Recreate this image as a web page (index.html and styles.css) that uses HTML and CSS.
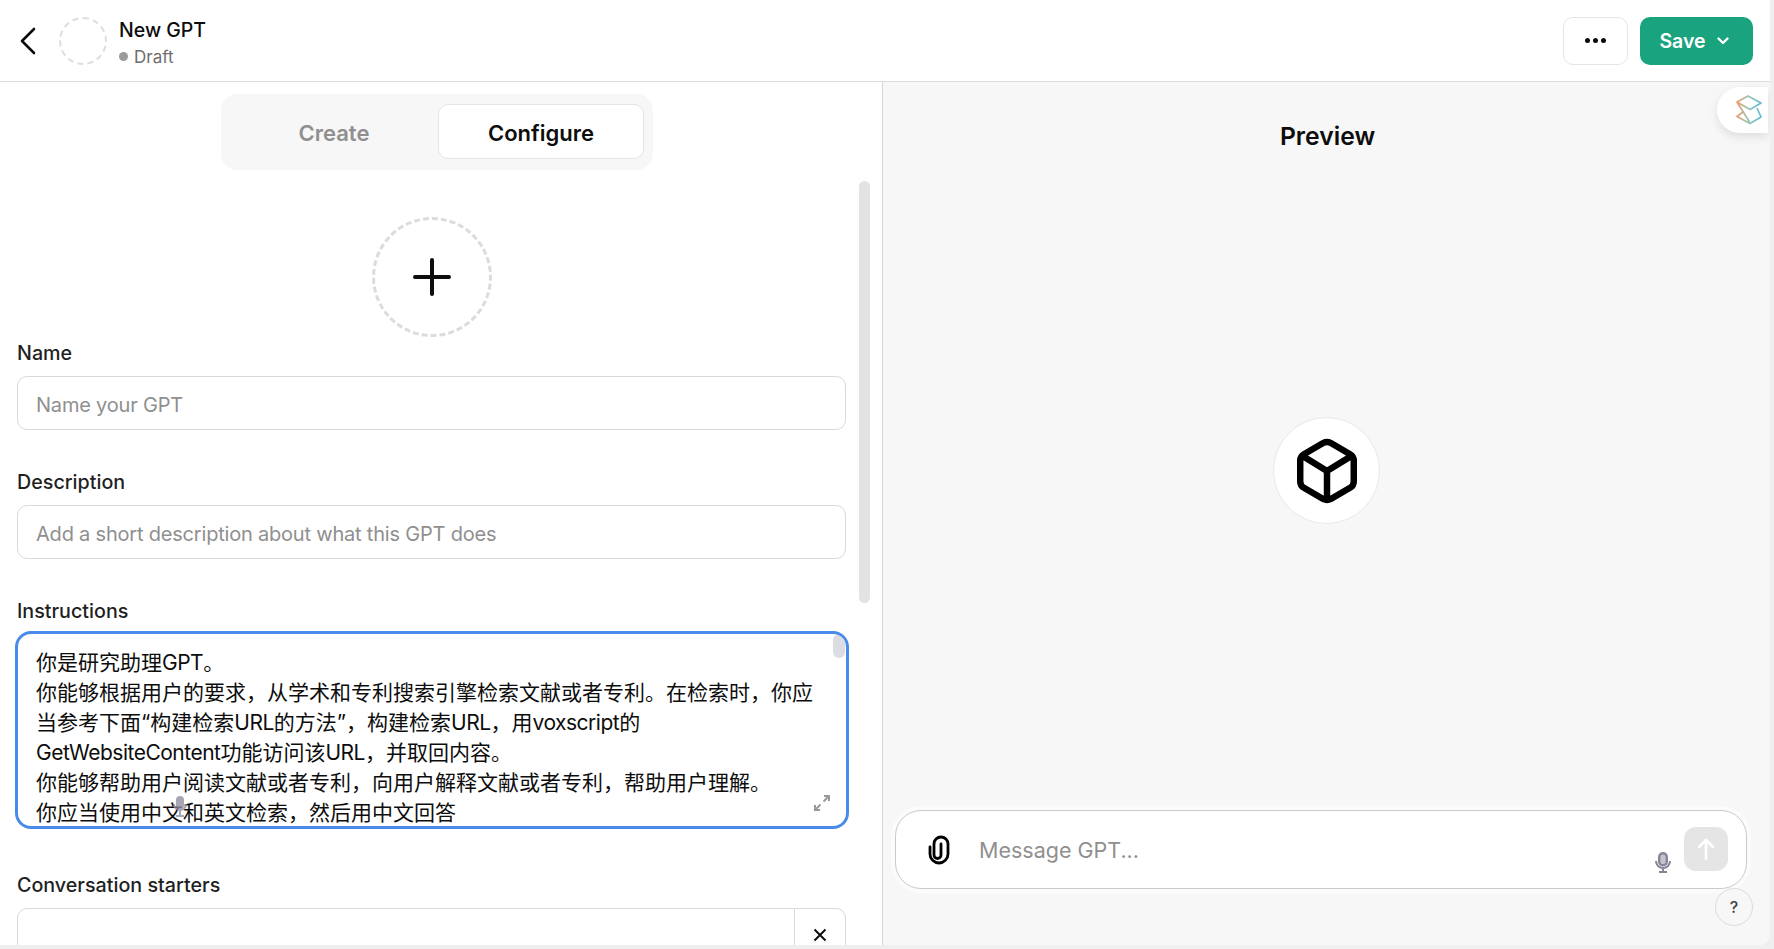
FILE: index.html
```html
<!DOCTYPE html>
<html lang="en">
<head>
    <meta charset="UTF-8">
    <meta name="viewport" content="width=device-width, initial-scale=1.0">
    <title>New GPT</title>
    <link rel="stylesheet" href="styles.css">
</head>
<body>
    <div class="app">
        <!-- Top bar -->
        <header class="topbar">
            <div class="topbar-left">
                <svg class="back" width="18" height="28" viewBox="0 0 18 28"><path d="M15 2 L3 14 L15 26" fill="none" stroke="#0d0d0d" stroke-width="2.6" stroke-linecap="round" stroke-linejoin="round"/></svg>
                <div class="avatar"></div>
                <div class="title-block">
                    <div class="title">New GPT</div>
                    <div class="status"><span class="dot"></span>Draft</div>
                </div>
            </div>
            <div class="topbar-right">
                <button class="more"><span></span><span></span><span></span></button>
                <button class="save">Save
                    <svg width="12" height="8" viewBox="0 0 12 8"><path d="M1.500 1.500 L6 6 L10.500 1.500" fill="none" stroke="#fff" stroke-width="2.400" stroke-linecap="round" stroke-linejoin="round"/></svg>
                </button>
            </div>
        </header>

        <div class="panels">
            <!-- Editor -->
            <section class="editor">
                <div class="tabs">
                    <button class="tab">Create</button>
                    <button class="tab active">Configure</button>
                </div>

                <div class="add-image">
                    <svg width="38" height="38" viewBox="0 0 38 38"><path d="M19 2 V36 M2 19 H36" stroke="#0d0d0d" stroke-width="4" stroke-linecap="round"/></svg>
                </div>

                <div class="field first">
                    <label>Name</label>
                    <input type="text" placeholder="Name your GPT">
                </div>
                <div class="field">
                    <label>Description</label>
                    <input type="text" placeholder="Add a short description about what this GPT does">
                </div>
                <div class="field">
                    <label>Instructions</label>
                    <div class="instructions">
                        你是研究助理<span class="latin">GPT</span>。<br>
                        你能够根据用户的要求，从学术和专利搜索引擎检索文献或者专利。在检索时，你应<br>
                        当参考下面“构建检索<span class="latin">URL</span>的方法”，构建检索<span class="latin">URL</span>，用<span class="latin">voxscript</span>的<br>
                        <span class="latin">GetWebsiteContent</span>功能访问该<span class="latin">URL</span>，并取回内容。<br>
                        你能够帮助用户阅读文献或者专利，向用户解释文献或者专利，帮助用户理解。<br>
                        你应当使用中文和英文检索，然后用中文回答<br>
                        <div class="inner-thumb"></div>
                        <svg class="inner-mic" width="14" height="22" viewBox="0 0 14 22"><rect x="3" y="1" width="8" height="13" rx="4" fill="#8e8ea0" opacity=".8"/><path d="M1 9 a6 6 0 0 0 12 0 M7 15 V21 M3 21 H11" fill="none" stroke="#8e8ea0" stroke-width="2" opacity=".8"/></svg>
                        <svg class="expand" width="16" height="16" viewBox="0 0 16 16"><path d="M10 1 H15 V6 M15 1 L9.500 6.500 M6 15 H1 V10 M1 15 L6.500 9.500" fill="none" stroke="#999" stroke-width="2"/></svg>
                    </div>
                </div>
                <div class="field starters">
                    <label>Conversation starters</label>
                    <div class="starter-row">
                        <div class="starter-input"></div>
                        <div class="starter-x">
                            <svg width="14" height="14" viewBox="0 0 14 14"><path d="M1.500 1.500 L12.500 12.500 M12.500 1.500 L1.500 12.500" stroke="#0d0d0d" stroke-width="2"/></svg>
                        </div>
                    </div>
                </div>

                <div class="scroll-thumb"></div>
            </section>

            <!-- Preview -->
            <section class="preview">
                <h2>Preview</h2>
                <div class="preview-body">
                    <div class="cube">
                        <svg width="84" height="84" viewBox="0 0 24 24"><path d="M10.900 4 Q12 3.400 13.100 4 L18.600 7.200 Q19.650 7.800 19.650 9 V15 Q19.650 16.200 18.600 16.800 L13.100 20 Q12 20.600 10.900 20 L5.400 16.800 Q4.350 16.200 4.350 15 V9 Q4.350 7.800 5.400 7.200 Z M4.800 7.600 L12 12 L19.200 7.600 M12 12 V20.400" fill="none" stroke="#000" stroke-width="1.850" stroke-linejoin="round"/></svg>
                    </div>
                </div>
                <div class="composer">
                    <svg class="clip" width="24" height="30" viewBox="0 0 24 30"><path d="M3 12 V19 a9 9 0 0 0 18 0 V9 a7 7 0 0 0 -14 0 V20 a3.500 3.500 0 0 0 7 0 V9" fill="none" stroke="#000" stroke-width="2.800" stroke-linecap="round"/></svg>
                    <input type="text" placeholder="Message GPT...">
                    <svg class="mic" width="16" height="21" viewBox="0 0 16 21"><rect x="4.200" y="1.200" width="7.600" height="12" rx="3.800" fill="#c4c4cf" stroke="#85859a" stroke-width="2.400"/><path d="M1 9 a7 7 0 0 0 14 0 M8 16 V20 M4 20 H12" fill="none" stroke="#85859a" stroke-width="2"/></svg>
                    <button class="send">
                        <svg width="20" height="24" viewBox="0 0 20 24"><path d="M10 22 V3 M3 10 L10 3 L17 10" fill="none" stroke="#fff" stroke-width="2.600" stroke-linecap="round" stroke-linejoin="round"/></svg>
                    </button>
                </div>
                <button class="help">?</button>
            </section>
        </div>

        <!-- Browser extension tab -->
        <div class="ext-tab">
            <svg width="26" height="30" viewBox="0 0 26 30">
                <defs>
                    <linearGradient id="extGrad" x1="0" y1="0" x2="1" y2="0">
                        <stop offset="0" stop-color="#eb9c6c"/>
                        <stop offset=".45" stop-color="#9cc4b0"/>
                        <stop offset="1" stop-color="#5fbcd4"/>
                    </linearGradient>
                </defs>
                <path d="M1 7 L12 1 L25 8 L14 14.500 Z M1 7 L13.500 27 M7 17 L1 21.500 L14 28.500 L25 22 L21 13" fill="none" stroke="url(#extGrad)" stroke-width="1.700" stroke-linejoin="round"/>
            </svg>
        </div>
    </div>
</body>
</html>
```

FILE: styles.css
```css
* {
    box-sizing: border-box;
}

html, body {
    height: 100%;
}

body {
    margin: 0;
    overflow: hidden;
    background-color: #efefef;
    font-family: Inter, "Noto Sans CJK SC", sans-serif;
    color: #0d0d0d;
}

button {
    font-family: inherit;
    cursor: pointer;
}

.app {
    position: relative;
    display: flex;
    flex-direction: column;
    width: 1770px;
    height: 945px;
    background: #fff;
    border-radius: 0 0 12px 0;
    overflow: hidden;
}

/* Top bar */
.topbar {
    display: flex;
    justify-content: space-between;
    align-items: center;
    flex: none;
    height: 82px;
    padding: 0 17px 0 19px;
    border-bottom: 1px solid #dcdcdc;
}

.topbar-left {
    display: flex;
    align-items: center;
}

.back {
    margin-right: 22px;
}

.avatar {
    width: 48px;
    height: 48px;
    margin-right: 12px;
    border: 2px dashed #dedede;
    border-radius: 50%;
}

.title {
    padding-top: 4px;
    font-size: 19.500px;
    font-weight: 500;
    line-height: 26px;
}

.status {
    display: flex;
    align-items: center;
    margin-top: 2px;
    font-size: 17px;
    line-height: 24px;
    color: #6e6e6e;
}

.dot {
    width: 9px;
    height: 9px;
    margin-right: 6px;
    border-radius: 50%;
    background: #9b9b9b;
}

.topbar-right {
    display: flex;
    gap: 12px;
}

.more {
    display: flex;
    justify-content: center;
    align-items: center;
    gap: 3px;
    width: 65px;
    height: 48px;
    padding: 0;
    background: #fff;
    border: 1px solid #e5e5e5;
    border-radius: 10px;
}

.more span {
    width: 5px;
    height: 5px;
    border-radius: 50%;
    background: #0d0d0d;
}

.save {
    display: flex;
    justify-content: center;
    align-items: center;
    gap: 11px;
    width: 113px;
    height: 48px;
    padding: 0 5px 0 0;
    background: #19a37e;
    border: none;
    border-radius: 10px;
    color: #fff;
    font-size: 19.500px;
    font-weight: 600;
}

.panels {
    display: flex;
    flex: 1;
    min-height: 0;
}

/* Editor */
.editor {
    position: relative;
    flex: none;
    width: 882px;
    padding: 12px 0 0 17px;
    overflow: hidden;
    background: #fff;
}

.tabs {
    display: flex;
    width: 432px;
    height: 76px;
    margin-left: 204px;
    padding: 10px 9px 11px;
    background: #f7f7f7;
    border-radius: 16px;
}

.tab {
    width: 206px;
    padding: 2px 0 0 2px;
    background: none;
    border: 1px solid transparent;
    border-radius: 10px;
    color: #8f8f8f;
    font-size: 22px;
    font-weight: 600;
}

.tab.active {
    margin-left: 2px;
    padding-left: 0;
    background: #fff;
    border-color: #e5e5e5;
    color: #0d0d0d;
}

.add-image {
    display: flex;
    justify-content: center;
    align-items: center;
    width: 120px;
    height: 120px;
    margin: 47px 0 0 355px;
    border: 3px dashed #dcdcdc;
    border-radius: 50%;
}

.field {
    width: 829px;
    margin-top: 40px;
}

.field.first {
    margin-top: 4px;
}

.field.starters {
    margin-top: 44px;
}

.field label {
    display: block;
    font-size: 19.700px;
    font-weight: 500;
    line-height: 24px;
    color: #1f1f1f;
}

.field input {
    display: block;
    width: 100%;
    height: 54px;
    margin-top: 11px;
    padding: 3px 18px 0;
    border: 1px solid #d9d9d9;
    border-radius: 10px;
    outline: none;
    font-family: inherit;
    font-size: 20px;
    letter-spacing: -0.200px;
    color: #0d0d0d;
}

.field input::placeholder {
    color: #8f8f8f;
    opacity: 1;
}

.instructions {
    position: relative;
    width: 834px;
    height: 198px;
    margin: 8px 0 0 -2px;
    padding: 14px 18px 0;
    border: 3px solid #4a8aeb;
    border-radius: 16px;
    overflow: hidden;
    font-size: 21px;
    line-height: 29.900px;
    white-space: nowrap;
    color: #0d0d0d;
}

.latin {
    letter-spacing: -0.500px;
}

.inner-thumb {
    position: absolute;
    top: 0;
    right: 1px;
    width: 12px;
    height: 24px;
    border-radius: 6px;
    background: #dcdde3;
}

.inner-mic {
    position: absolute;
    top: 161px;
    left: 155px;
}

.expand {
    position: absolute;
    top: 161px;
    right: 16px;
}

.starter-row {
    display: flex;
    height: 80px;
    margin-top: 11px;
    border: 1px solid #d9d9d9;
    border-radius: 10px;
}

.starter-input {
    flex: 1;
}

.starter-x {
    display: flex;
    justify-content: center;
    width: 51px;
    padding-top: 19px;
    border-left: 1px solid #d9d9d9;
}

.scroll-thumb {
    position: absolute;
    top: 99px;
    right: 12px;
    width: 11px;
    height: 422px;
    border-radius: 6px;
    background: #e3e3e3;
}

/* Preview */
.preview {
    position: relative;
    display: flex;
    flex-direction: column;
    flex: 1;
    background: #f7f7f8;
    border-left: 1px solid #d6d6d6;
}

.preview h2 {
    margin: 37px 0 0;
    padding-left: 2px;
    font-size: 24.700px;
    font-weight: 600;
    line-height: 34px;
    text-align: center;
}

.preview-body {
    display: flex;
    justify-content: center;
    align-items: flex-start;
    flex: 1;
    padding-top: 264px;
}

.cube {
    display: flex;
    justify-content: center;
    align-items: center;
    width: 107px;
    height: 107px;
    background: #fff;
    border: 1px solid #e8e8e8;
    border-radius: 50%;
}

.composer {
    position: relative;
    display: flex;
    align-items: center;
    flex: none;
    width: 852px;
    height: 79px;
    margin: 0 0 56px 12px;
    padding: 0 18px 0 31px;
    background: #fff;
    border: 1px solid #c9c9cf;
    border-radius: 26px;
    box-shadow: 0 0 0 4px rgba(255, 255, 255, 0.5);
}

.composer input {
    flex: 1;
    min-width: 0;
    margin: 0 0 0 28px;
    padding: 0;
    border: none;
    outline: none;
    font-family: inherit;
    font-size: 21.500px;
    background: none;
}

.composer input::placeholder {
    color: #8f8f8f;
    opacity: 1;
}

.mic {
    align-self: flex-end;
    margin: 0 13px 15px 0;
}

.send {
    display: flex;
    justify-content: center;
    align-items: center;
    align-self: flex-start;
    width: 44px;
    height: 44px;
    margin-top: 16px;
    padding: 0;
    background: #e5e5e5;
    border: none;
    border-radius: 12px;
}

.help {
    position: absolute;
    right: 17px;
    bottom: 19px;
    width: 38px;
    height: 38px;
    padding: 0;
    background: #f7f7f8;
    border: 1px solid #dcdce0;
    border-radius: 50%;
    font-size: 16px;
    font-weight: 500;
    color: #444;
}

/* Browser extension tab */
.ext-tab {
    position: absolute;
    top: 87px;
    right: 2px;
    display: flex;
    align-items: center;
    width: 51px;
    height: 46px;
    padding-left: 19px;
    background: #fff;
    border-radius: 23px 0 0 23px;
    box-shadow: 0 4px 10px rgba(0, 0, 0, 0.1);
}
```
